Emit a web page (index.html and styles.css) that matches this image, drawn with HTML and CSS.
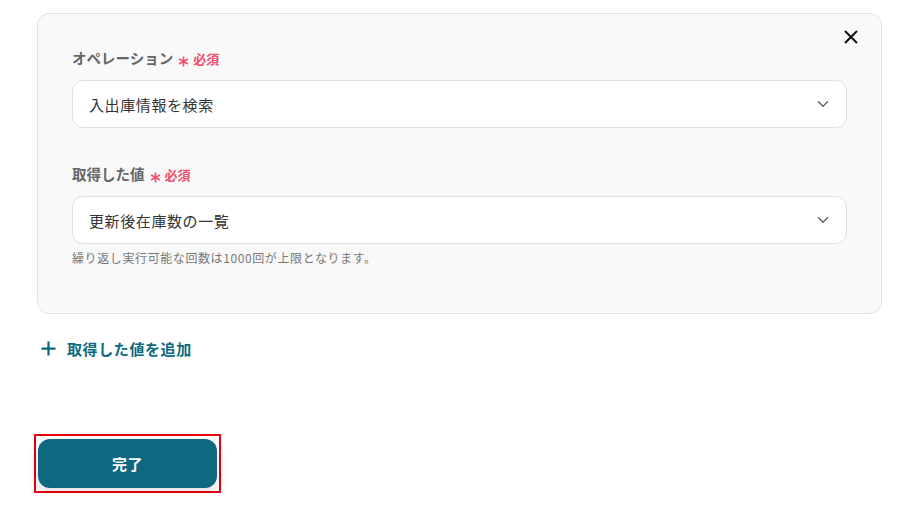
FILE: index.html
```html
<!DOCTYPE html>
<html lang="ja">
  <head>
    <meta charset="UTF-8" />
    <meta name="viewport" content="width=device-width, initial-scale=1.0" />
    <title>取得した値</title>
    <link rel="stylesheet" href="styles.css">
  </head>
  <body>
    <div class="page">
      <div class="card">
        <button class="close-button" aria-label="閉じる">
          <svg viewBox="0 0 14 14" class="close-icon">
            <path d="M1 1L13 13M13 1L1 13" stroke="#111" stroke-width="2" fill="none"></path>
          </svg>
        </button>

        <div class="field">
          <div class="field-label">
            <span>オペレーション</span>
            <svg viewBox="0 0 12 12" class="required-mark">
              <path d="M6 0.5V11.5M1.2 3.2L10.8 8.8M10.8 3.2L1.2 8.8" stroke="#f0506e" stroke-width="1.8" fill="none"></path>
            </svg>
            <span class="required-text">必須</span>
          </div>
          <div class="select">
            <span>入出庫情報を検索</span>
            <svg viewBox="0 0 24 24" class="chevron">
              <path d="M6 9l6 6 6-6" stroke="#666" stroke-width="2" stroke-linecap="round" stroke-linejoin="round" fill="none"></path>
            </svg>
          </div>
        </div>

        <div class="field">
          <div class="field-label">
            <span>取得した値</span>
            <svg viewBox="0 0 12 12" class="required-mark">
              <path d="M6 0.5V11.5M1.2 3.2L10.8 8.8M10.8 3.2L1.2 8.8" stroke="#f0506e" stroke-width="1.8" fill="none"></path>
            </svg>
            <span class="required-text">必須</span>
          </div>
          <div class="select">
            <span>更新後在庫数の一覧</span>
            <svg viewBox="0 0 24 24" class="chevron">
              <path d="M6 9l6 6 6-6" stroke="#666" stroke-width="2" stroke-linecap="round" stroke-linejoin="round" fill="none"></path>
            </svg>
          </div>
          <div class="help-text">繰り返し実行可能な回数は1000回が上限となります。</div>
        </div>
      </div>

      <div class="add-link">
        <svg viewBox="0 0 16 16" class="plus-icon">
          <path d="M8 0.5V15.5M0.5 8H15.5" stroke="#0d6a80" stroke-width="2.4" fill="none"></path>
        </svg>
        <span>取得した値を追加</span>
      </div>

      <div class="highlight">
        <button class="done-button">完了</button>
      </div>
    </div>
  </body>
</html>
```

FILE: styles.css
```css
body {
  margin: 0;
  background: #fff;
  font-family: "Noto Sans CJK JP", "Noto Sans", sans-serif;
  color: #333;
}

.page {
  width: 845px;
  padding: 13px 0 0 37px;
}

.card {
  position: relative;
  background: #f9f9f9;
  border: 1px solid #e3e3e6;
  border-radius: 12px;
  padding: 33px 34px 46px 34px;
}

.close-button {
  position: absolute;
  top: 16px;
  right: 23px;
  width: 14px;
  height: 14px;
  padding: 0;
  border: none;
  background: none;
  cursor: pointer;
  display: flex;
}

.close-icon {
  width: 14px;
  height: 14px;
}

.field + .field {
  margin-top: 35px;
}

.field-label {
  font-size: 14.5px;
  font-weight: bold;
  color: #666;
  line-height: 22px;
  margin-bottom: 11px;
  display: flex;
  align-items: center;
}

.required-mark {
  width: 11px;
  height: 11px;
  margin-left: 5px;
  position: relative;
  top: 3px;
}

.required-text {
  color: #f0506e;
  font-size: 13px;
  font-weight: bold;
  margin-left: 4px;
  position: relative;
  top: 1px;
}

.select {
  height: 46px;
  background: #fff;
  border: 1px solid #dedfe6;
  border-radius: 11px;
  display: flex;
  align-items: center;
  justify-content: space-between;
  padding: 0 14px 0 16px;
  font-size: 15px;
  letter-spacing: 0.04em;
  color: #333;
}

.chevron {
  width: 18px;
  height: 18px;
}

.help-text {
  margin-top: 5px;
  font-size: 12px;
  line-height: 18px;
  letter-spacing: 0.05em;
  color: #777;
}

.add-link {
  margin-top: 24px;
  display: flex;
  align-items: center;
  gap: 11px;
  padding-left: 4px;
  height: 20px;
  font-size: 15px;
  font-weight: bold;
  letter-spacing: 0.04em;
  color: #0d6a80;
}

.plus-icon {
  width: 15px;
  height: 15px;
}

.highlight {
  margin-top: 76px;
  margin-left: -3px;
  width: 179px;
  border: 2px solid #e8000b;
  padding: 3px 2px;
}

.done-button {
  display: block;
  width: 179px;
  height: 49px;
  border: none;
  border-radius: 12px;
  background: #0d6880;
  color: #fff;
  font-family: "Noto Sans CJK JP", sans-serif;
  font-size: 15px;
  font-weight: bold;
  letter-spacing: 0.04em;
  box-shadow: 0 6px 14px rgba(0, 0, 0, 0.12);
  cursor: pointer;
}
```
